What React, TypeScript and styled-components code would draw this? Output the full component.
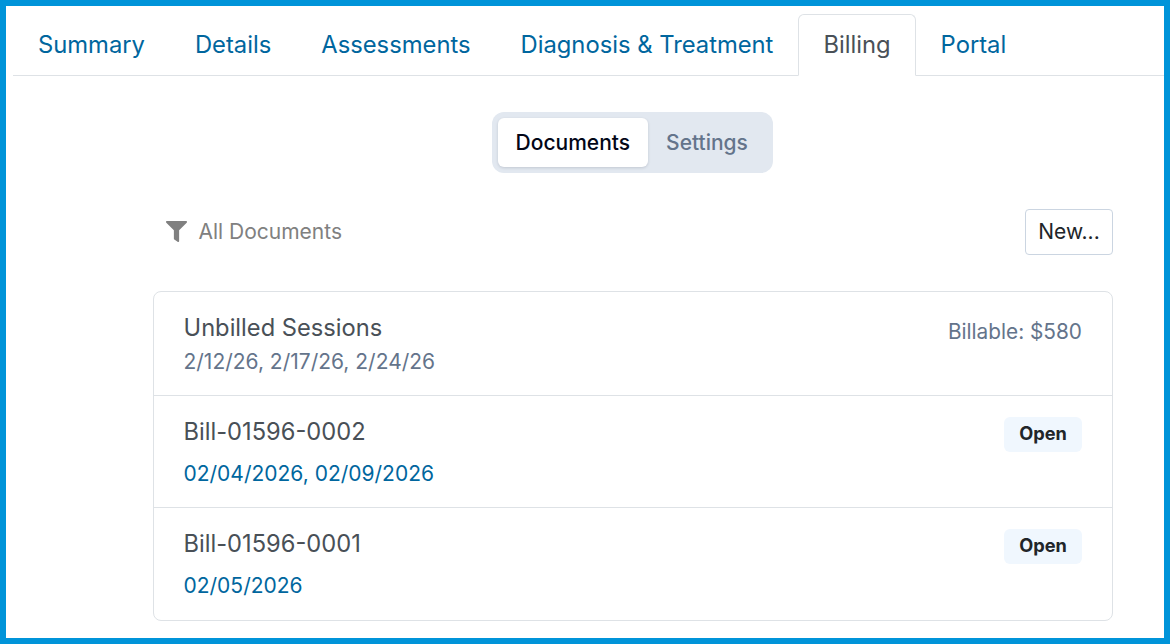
import { FC } from 'react';
import { FaFilter } from 'react-icons/fa';
import styled, { createGlobalStyle } from 'styled-components';

const GlobalStyle = createGlobalStyle`
  html, body {
    margin: 0;
    padding: 0;
    background: #fff;
    font-family: Inter, 'Liberation Sans', sans-serif;
  }
  * { box-sizing: border-box; }
`;

const Frame = styled.div`
  width: 1170px;
  height: 644px;
  border: 6px solid #0094d9;
  overflow: hidden;
  background: #fff;
`;

const TabBar = styled.nav`
  display: flex;
  align-items: flex-end;
  height: 70px;
  margin-left: 7px;
  padding-top: 8px;
  border-bottom: 1px solid #dee2e6;
`;

const Tab = styled.div<{ $active?: boolean }>`
  height: 62px;
  padding: 0 24px 2px;
  margin-bottom: -1px;
  display: flex;
  align-items: center;
  font-size: 23.78px;
  border: 1px solid ${(p) => (p.$active ? '#dee2e6' : 'transparent')};
  border-bottom-color: ${(p) => (p.$active ? '#fff' : 'transparent')};
  border-radius: 6px 6px 0 0;
  background: ${(p) => (p.$active ? '#fff' : 'transparent')};
  color: ${(p) => (p.$active ? '#495057' : '#00669e')};
`;

const Content = styled.div`
  width: 960px;
  margin-left: 147px;
`;

const SwitchRow = styled.div`
  display: flex;
  justify-content: center;
  padding-top: 36px;
  margin-left: -1px;
`;

const Switch = styled.div`
  display: flex;
  align-items: center;
  height: 61px;
  padding: 6px;
  border-radius: 12px;
  background: #e2e8f0;
`;

const SwitchOption = styled.div<{ $active?: boolean }>`
  height: 49px;
  padding: ${(p) => (p.$active ? '0 18px 1px 17.5px' : '0 19px 1px 18px')};
  display: flex;
  align-items: center;
  font-size: 21px;
  font-weight: 500;
  border-radius: 6px;
  background: ${(p) => (p.$active ? '#fff' : 'transparent')};
  box-shadow: ${(p) => (p.$active ? '0 1px 3px rgba(15, 23, 42, 0.15)' : 'none')};
  color: ${(p) => (p.$active ? '#020617' : '#64748b')};
`;

const Toolbar = styled.div`
  display: flex;
  justify-content: space-between;
  align-items: center;
  margin-top: 36px;
`;

const Filter = styled.div`
  display: flex;
  align-items: center;
  gap: 11.5px;
  padding: 0 0 1px 13px;
  font-size: 21px;
  color: #808080;
`;

const NewButton = styled.button`
  width: 88px;
  height: 46px;
  padding: 0 0 1px;
  font: inherit;
  font-size: 21px;
  color: #212529;
  background: #fff;
  border: 1px solid #cbd5e1;
  border-radius: 4px;
`;

const List = styled.div`
  margin-top: 36px;
  border: 1px solid #dee2e6;
  border-radius: 8px;
`;

const Row = styled.div`
  display: flex;
  justify-content: space-between;
  height: 112px;
  padding: 20px 30px 0 29.5px;
  border-top: 1px solid #dee2e6;
`;

const FirstRow = styled(Row)`
  height: 103px;
  border-top: none;
`;

const LastRow = styled(Row)`
  height: 113px;
`;

const Title = styled.div`
  font-size: 23.7px;
  line-height: 32px;
  color: #495057;
`;

const Sessions = styled.div`
  font-size: 21px;
  line-height: 34px;
  margin-top: 1px;
  color: #64748b;
`;

const Dates = styled.div`
  margin-top: 10px;
  font-size: 21px;
  line-height: 32px;
  color: #00669e;
`;

const Billable = styled.div`
  font-size: 20.8px;
  line-height: 40px;
  color: #64748b;
`;

const Badge = styled.span`
  width: 78px;
  height: 35px;
  margin-top: 1px;
  padding-bottom: 3px;
  display: flex;
  align-items: center;
  justify-content: center;
  font-size: 18.2px;
  font-weight: 700;
  color: #212529;
  background: #f0f7fe;
  border-radius: 6px;
`;

const tabs = ['Summary', 'Details', 'Assessments', 'Diagnosis & Treatment', 'Billing', 'Portal'];

const App: FC = () => (
  <>
    <GlobalStyle />
    <Frame>
      <TabBar>
        {tabs.map((tab) => (
          <Tab key={tab} $active={tab === 'Billing'}>
            {tab}
          </Tab>
        ))}
      </TabBar>
      <Content>
        <SwitchRow>
          <Switch>
            <SwitchOption $active>Documents</SwitchOption>
            <SwitchOption>Settings</SwitchOption>
          </Switch>
        </SwitchRow>
        <Toolbar>
          <Filter>
            <FaFilter size={21} color="#808080" />
            All Documents
          </Filter>
          <NewButton>New...</NewButton>
        </Toolbar>
        <List>
          <FirstRow>
            <div>
              <Title>Unbilled Sessions</Title>
              <Sessions>2/12/26, 2/17/26, 2/24/26</Sessions>
            </div>
            <Billable>Billable: $580</Billable>
          </FirstRow>
          <Row>
            <div>
              <Title>Bill-01596-0002</Title>
              <Dates>02/04/2026, 02/09/2026</Dates>
            </div>
            <Badge>Open</Badge>
          </Row>
          <LastRow>
            <div>
              <Title>Bill-01596-0001</Title>
              <Dates>02/05/2026</Dates>
            </div>
            <Badge>Open</Badge>
          </LastRow>
        </List>
      </Content>
    </Frame>
  </>
);

export default App;
